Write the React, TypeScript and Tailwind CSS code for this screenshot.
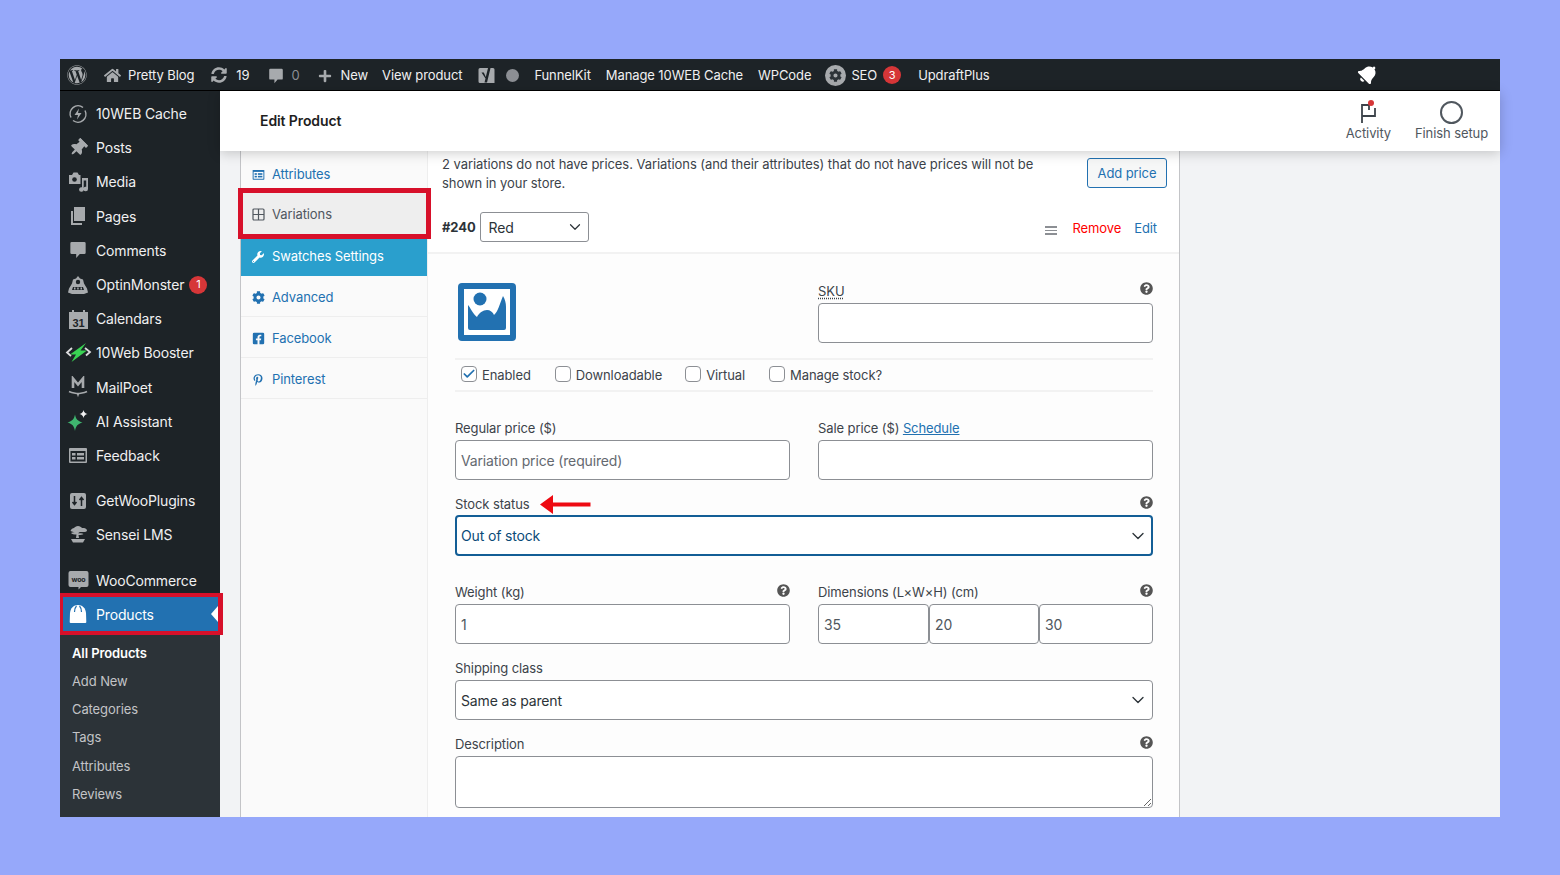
import { ReactNode } from 'react'
import { ChevronDown, Check } from 'lucide-react'
import {
  FaWordpress,
  FaHome,
  FaSyncAlt,
  FaPlus,
  FaBell,
  FaThumbtack,
  FaQuestionCircle,
  FaWrench,
  FaCog,
  FaFacebookSquare,
  FaPinterestP,
} from 'react-icons/fa'

const gray = '#a7aaad'

function Bubble({ size = 18, fill = gray }: { size?: number; fill?: string }) {
  return (
    <svg width={size} height={size} viewBox="0 0 20 20">
      <path d="M3 1h14a1.500 1.500 0 0 1 1.500 1.500v10.500a1.500 1.500 0 0 1-1.500 1.500h-5l-4 4.500v-4.500H3A1.500 1.500 0 0 1 1.500 13V2.500A1.500 1.500 0 0 1 3 1z" fill={fill} />
    </svg>
  )
}

function YoastIcon() {
  return (
    <svg width="19" height="20" viewBox="0 0 19 20">
      <path d="M3 3h13a1.500 1.500 0 0 1 1.500 1.500V18H3a1.500 1.500 0 0 1-1.500-1.500v-12A1.500 1.500 0 0 1 3 3z" fill={gray} />
      <path d="M4.500 7.500h2.300l2 4.500 2.700-11h2.500l-4 16.500H7.500l1-4z" fill="#1d2327" />
    </svg>
  )
}

function CacheIcon() {
  return (
    <svg width="20" height="20" viewBox="0 0 20 20" fill="none">
      <path d="M3 13.500A8 8 0 0 1 15 3.500M17 6.500A8 8 0 0 1 5 16.500" stroke={gray} strokeWidth="1.500" />
      <path d="M11 4.500 6.500 11H10l-1 4.500 4.500-6.500H10z" fill={gray} />
    </svg>
  )
}

function MediaIcon() {
  return (
    <svg width="21" height="21" viewBox="0 0 21 21" fill={gray}>
      <path d="M1 4h3l1.500-2.500h4L11 4h1.500v9H1z" />
      <circle cx="6.500" cy="8.500" r="2.300" fill="#1d2327" />
      <path d="M14 7h6v11a2.300 2.300 0 1 1-1.800-2.200V9.500h-2.500v9a2.300 2.300 0 1 1-1.700-2.200z" />
    </svg>
  )
}

function PagesIcon() {
  return (
    <svg width="20" height="20" viewBox="0 0 20 20" fill={gray}>
      <path d="M6 1h11v14H6z" />
      <path d="M3 5h2v12h9v2H3z" />
    </svg>
  )
}

function MonsterIcon() {
  return (
    <svg width="22" height="20" viewBox="0 0 22 20" fill={gray}>
      <path d="M11 1l2 2.500 3 1 1 4 3 5 1 4-4 1.500H5L1 17.500l1-4 3-5 1-4 3-1z" />
      <circle cx="11" cy="7" r="2.200" fill="#1d2327" />
      <path d="M6 12h10l1 3H5z" fill="#1d2327" />
      <path d="M7 12.500h1.500v2H7zM10.200 12.500h1.500v2h-1.500zM13.500 12.500H15v2h-1.500z" />
    </svg>
  )
}

function CalendarIcon() {
  return (
    <svg width="21" height="20" viewBox="0 0 21 20">
      <path d="M1 3h3V1h2v2h9V1h2v2h3v17H1z" fill={gray} />
      <text x="10.500" y="17.500" textAnchor="middle" fontSize="11" fontWeight="700" fontFamily="Liberation Sans, sans-serif" fill="#1d2327">
        31
      </text>
    </svg>
  )
}

function BoosterIcon() {
  return (
    <svg width="27" height="19" viewBox="0 0 27 19" fill="none">
      <path d="M7 5 2 9.500l4 3.500M20 5l5 4-4 3.500" stroke="#dcdcde" strokeWidth="1.800" />
      <path d="M21 0 5 11.500h6L6.500 19 22 7.500h-6.500z" fill="#39d353" />
    </svg>
  )
}

function MailPoetIcon() {
  return (
    <svg width="20" height="22" viewBox="0 0 20 22" fill="none">
      <path d="M5 12V2.500L10 8.500l5-6V12" stroke={gray} strokeWidth="2.600" />
      <path d="M1 15.500c3 1.500 6 1.500 8.500 2l.5 1.500.5-1.500c3-.5 6-.5 8.500-2" stroke={gray} strokeWidth="1.500" />
    </svg>
  )
}

function SparkIcon() {
  return (
    <svg width="22" height="22" viewBox="0 0 22 22">
      <path d="M8 4.500c.8 4.500 2.800 6.700 7.500 8C10.800 13.800 8.800 16 8 21c-.8-5-2.800-7.200-7.500-8.500C5.200 11.200 7.200 9 8 4.500z" fill="#3fb56f" />
      <path d="M16.500 0c.5 2.300 1.500 3.300 4 4-2.500.7-3.500 1.700-4 4-.5-2.300-1.500-3.300-4-4 2.500-.7 3.500-1.700 4-4z" fill="#f0f0f1" />
    </svg>
  )
}

function FormIcon({ fill = gray, bg = '#1d2327', size = 20 }: { fill?: string; bg?: string; size?: number }) {
  return (
    <svg width={size} height={size} viewBox="0 0 20 20">
      <rect x="1" y="3" width="18" height="15" rx="1" fill={fill} />
      <rect x="2.500" y="6" width="15" height="10.500" fill={bg} />
      <rect x="4" y="8" width="3.500" height="2.500" fill={fill} />
      <rect x="4" y="12" width="3.500" height="2.500" fill={fill} />
      <rect x="9" y="8" width="7" height="2.500" fill={fill} />
      <rect x="9" y="12" width="7" height="2.500" fill={fill} />
    </svg>
  )
}

function PluginsIcon() {
  return (
    <svg width="18" height="18" viewBox="0 0 18 18">
      <rect x="1" y="1" width="16" height="16" rx="2" fill={gray} />
      <path d="M5.500 4v8M3.500 10l2 2.500 2-2.500M12.500 14V6M10.500 8l2-2.500 2 2.500" stroke="#1d2327" strokeWidth="1.500" fill="none" />
    </svg>
  )
}

function SenseiIcon() {
  return (
    <svg width="20" height="20" viewBox="0 0 20 20" fill={gray}>
      <path d="M10 1c2 0 3 1 4 2h2c1 0 3 1 3 2.500S17 7 15.500 7H12c-1 0-1.500 1-1.500 1.500 2-.5 4-.5 5 .5-1 .8-3 1-5 1l.5 3H8l.5-3.500C6 9.500 4 9 3 8c1-.8 3-1 5-.5C7 7 4 7 2.500 6 3 4 5 3 6 3c1-1 2-2 4-2z" />
      <path d="M3 14h14l-2 3.500H5z" />
    </svg>
  )
}

function WooIcon() {
  return (
    <svg width="21" height="20" viewBox="0 0 21 20">
      <path d="M2.500 1h16A2 2 0 0 1 20.500 3v12a2 2 0 0 1-2 2H13l-2.500 2.500V17h-8a2 2 0 0 1-2-2V3a2 2 0 0 1 2-2z" fill={gray} />
      <text x="10.500" y="11.500" textAnchor="middle" fontSize="7" fontWeight="700" fontFamily="Inter, sans-serif" fill="#1d2327">
        woo
      </text>
    </svg>
  )
}

function BagIcon() {
  return (
    <svg width="18" height="20" viewBox="0 0 18 20" fill="#fff">
      <path d="M9 1c4.500 0 7.500 3 8 8l.3 9a1 1 0 0 1-1 1H1.700a1 1 0 0 1-1-1L1 9c.5-5 3.500-8 8-8z" />
      <path d="M5.500 8c0-3 1-5 2-6M12.500 8c0-3-1-5-2-6" stroke="#2271b1" strokeWidth="1.200" fill="none" />
    </svg>
  )
}

type MenuEntry = { label: string; icon: ReactNode; badge?: string }

const menu: MenuEntry[] = [
  { label: '10WEB Cache', icon: <CacheIcon /> },
  { label: 'Posts', icon: <FaThumbtack size={18} color={gray} className="rotate-45" /> },
  { label: 'Media', icon: <MediaIcon /> },
  { label: 'Pages', icon: <PagesIcon /> },
  { label: 'Comments', icon: <Bubble /> },
  { label: 'OptinMonster', icon: <MonsterIcon />, badge: '1' },
  { label: 'Calendars', icon: <CalendarIcon /> },
  { label: '10Web Booster', icon: <BoosterIcon /> },
  { label: 'MailPoet', icon: <MailPoetIcon /> },
  { label: 'AI Assistant', icon: <SparkIcon /> },
  { label: 'Feedback', icon: <FormIcon /> },
]

const menuTwo: MenuEntry[] = [
  { label: 'GetWooPlugins', icon: <PluginsIcon /> },
  { label: 'Sensei LMS', icon: <SenseiIcon /> },
]

function MenuRow({ item }: { item: MenuEntry }) {
  return (
    <div className="flex h-[34.2px] items-center text-[14px] tracking-[-0.15px] text-[#f0f0f1]">
      <div className="flex w-[36px] shrink-0 justify-center">{item.icon}</div>
      <span>{item.label}</span>
      {item.badge && (
        <span className="ml-[5px] flex h-[18px] w-[18px] items-center justify-center rounded-full bg-[#d63638] text-[11px] text-white">
          {item.badge}
        </span>
      )}
    </div>
  )
}

function Sidebar() {
  return (
    <aside className="flex w-[160px] shrink-0 flex-col bg-[#1d2327] pt-[5.5px]">
      {menu.map((item) => (
        <MenuRow key={item.label} item={item} />
      ))}
      <div className="h-[11px]" />
      {menuTwo.map((item) => (
        <MenuRow key={item.label} item={item} />
      ))}
      <div className="h-[11px]" />
      <MenuRow item={{ label: 'WooCommerce', icon: <WooIcon /> }} />
      <div className="relative flex h-[34px] items-center bg-[#2271b1] text-[14px] tracking-[-0.15px] text-white">
        <div className="flex w-[36px] shrink-0 justify-center">
          <BagIcon />
        </div>
        <span>Products</span>
        <div className="absolute right-[2px] top-1/2 z-10 h-0 w-0 -translate-y-1/2 border-y-[8px] border-r-[7px] border-y-transparent border-r-white" />
        <div className="pointer-events-none absolute inset-x-0 right-[-3px] top-[-4px] bottom-[-4px] border-y-4 border-l-[3px] border-r-[5px] border-[#d7102a]" />
      </div>
      <div className="flex flex-1 flex-col bg-[#2c3338] pl-3 pt-[8px] text-[13px] text-[#c3c4c7]">
        <div className="flex h-[28.300px] items-center font-semibold text-white">All Products</div>
        {['Add New', 'Categories', 'Tags', 'Attributes', 'Reviews'].map((label) => (
          <div key={label} className="flex h-[28.300px] items-center">
            {label}
          </div>
        ))}
      </div>
    </aside>
  )
}

function AdminBar() {
  return (
    <div className="flex h-[32px] shrink-0 items-center border-b border-[#000] bg-[#1d2327] pt-[2px] text-[13px] text-[#f0f0f1]">
      <FaWordpress size={20} color={gray} className="-mt-[2px] ml-[7px]" />
      <FaHome size={17} color={gray} className="-mt-[1px] ml-[17px]" />
      <span className="ml-[7px]">Pretty Blog</span>
      <FaSyncAlt size={16} color={gray} className="-mt-[1px] ml-[17px]" />
      <span className="ml-[9px]">19</span>
      <span className="ml-[19px]">
        <Bubble size={16} />
      </span>
      <span className="ml-[7px] text-[#8c8f94]">0</span>
      <FaPlus size={14} color={gray} className="ml-[18px]" />
      <span className="ml-[9px]">New</span>
      <span className="ml-[14px]">View product</span>
      <span className="-mt-[2px] ml-[15px]">
        <YoastIcon />
      </span>
      <span className="-mt-[1px] ml-[10px] h-[13px] w-[13px] rounded-full bg-[#8c8f94]" />
      <span className="ml-[15px]">FunnelKit</span>
      <span className="ml-[15px]">Manage 10WEB Cache</span>
      <span className="ml-[15px]">WPCode</span>
      <span className="-mt-[1px] ml-[14px] flex h-[21px] w-[21px] items-center justify-center rounded-full bg-[#a7aaad]">
        <FaCog size={13} color="#2c3338" />
      </span>
      <span className="ml-[5px]">SEO</span>
      <span className="-mt-[1px] ml-[6px] flex h-[18px] w-[18px] items-center justify-center rounded-full bg-[#d63638] text-[11px] text-white">
        3
      </span>
      <span className="ml-[17px]">UpdraftPlus</span>
      <FaBell size={20} color="#fff" className="-mt-[4px] ml-auto mr-[122px] rotate-45" />
    </div>
  )
}

function PageHeader() {
  return (
    <header className="relative z-10 flex h-[60px] shrink-0 items-center justify-between bg-white pl-10 shadow-[0_2px_12px_rgba(0,0,0,0.2)]">
      <h1 className="pb-[2px] text-[14px] font-semibold text-[#1e1e1e]">Edit Product</h1>
      <div className="flex items-start gap-6 pr-3 text-[13px] text-[#50575e]">
        <div className="flex flex-col items-center">
          <div className="relative h-[28px] pt-[3px]">
            <svg width="17" height="21" viewBox="0 0 17 21" fill="none" stroke="#3c434a" strokeWidth="1.800">
              <path d="M2 21V3h7v5" />
              <path d="M2 14h13V6" />
            </svg>
            <span className="absolute right-[3px] top-[1px] h-[6px] w-[6px] rounded-full bg-[#d63638]" />
          </div>
          <span className="-mt-[3px]">Activity</span>
        </div>
        <div className="flex flex-col items-center">
          <div className="mt-[2px] h-[23px] w-[23px] rounded-full border-2 border-[#50575e]" />
          <span>Finish setup</span>
        </div>
      </div>
    </header>
  )
}

const tabLink = 'flex h-[41px] items-center gap-[7px] border-b border-[#eee] pl-[11px] pt-[3px] text-[13px] text-[#2271b1]'

function Tabs() {
  return (
    <nav className="w-[187px] shrink-0 border-r border-[#eee] bg-[#fafafa] pt-[2px]">
      <div className={tabLink}>
        <FormIcon fill="#2271b1" bg="#fff" size={13} />
        Attributes
      </div>
      <div className="relative flex h-[41px] items-center gap-[7px] bg-[#eee] pl-[11px] text-[13px] text-[#50575e]">
        <svg width="13" height="13" viewBox="0 0 13 13" fill="none" stroke="#50575e" strokeWidth="1.200">
          <rect x="1" y="1" width="11" height="11" rx="1" />
          <path d="M6.500 1v11M1 6.500h11" />
        </svg>
        Variations
        <div className="pointer-events-none absolute left-[-3px] right-[-4px] top-[-6px] bottom-[-4px] z-10 border-[5px] border-[#d7102a]" />
      </div>
      <div className="flex h-[41px] items-center gap-[8px] bg-[#2a9fcd] pl-[11px] pt-[2px] text-[13px] text-white">
        <FaWrench size={12} />
        Swatches Settings
      </div>
      <div className={tabLink}>
        <FaCog size={13} />
        Advanced
      </div>
      <div className={tabLink}>
        <FaFacebookSquare size={13} />
        Facebook
      </div>
      <div className={`${tabLink} !gap-[8px]`}>
        <FaPinterestP size={12} />
        Pinterest
      </div>
    </nav>
  )
}

function Help() {
  return <FaQuestionCircle size={13} color="#555" />
}

function Label({ text, help, children }: { text: ReactNode; help?: boolean; children?: ReactNode }) {
  return (
    <div className="flex h-[18px] items-center justify-between text-[13px] leading-none text-[#3c434a]">
      <span>{text}</span>
      {children}
      {help && (
        <span className="-mt-[4px]">
          <Help />
        </span>
      )}
    </div>
  )
}

const inputClass =
  'h-[40px] w-full rounded-[4px] border border-[#8c8f94] bg-white px-[5px] text-[14px] tracking-[-0.15px] text-[#50575e] placeholder:text-[#646970] outline-none'

function SelectBox({ value, focused }: { value: string; focused?: boolean }) {
  return (
    <div
      className={
        focused
          ? 'flex h-[41px] items-center justify-between rounded-[4px] border-2 border-[#135e96] bg-white pl-[4px] pr-[3px] text-[14px] tracking-[-0.15px] text-[#0a4b78]'
          : 'flex h-[40px] items-center justify-between rounded-[4px] border border-[#8c8f94] bg-white pl-[5px] pr-[4px] text-[14px] tracking-[-0.15px] text-[#2c3338]'
      }
    >
      <span>{value}</span>
      <ChevronDown size={20} strokeWidth={1.600} color="#2c3338" />
    </div>
  )
}

function CheckRow({ label, on, gap }: { label: string; on?: boolean; gap: string }) {
  return (
    <div className={`flex items-center gap-[5px] pt-[1px] text-[13px] text-[#3c434a] ${gap}`}>
      <span className="-mt-[3px] flex h-[16px] w-[16px] items-center justify-center rounded-[4px] border border-[#8c8f94] bg-white">
        {on && <Check size={14} strokeWidth={3} color="#2271b1" />}
      </span>
      {label}
    </div>
  )
}

function VariationForm() {
  return (
    <div className="flex-1 bg-[#fdfdfd] pl-[27px] pr-[26px] pt-[29px]">
      <div className="flex gap-[28px]">
        <div className="w-[335px] pl-[3px]">
          <svg width="58" height="58" viewBox="0 0 58 58">
            <rect width="58" height="58" rx="4" fill="#2271b1" />
            <rect x="6" y="6" width="46" height="46" fill="#fff" />
            <circle cx="22" cy="16" r="6.500" fill="#2271b1" />
            <path
              d="M10 22C12 24 15 31 19 34C21 30 25 27 29 27C32 27 35 29 36 32C40 29 42 20 45 13C47 16 48 20 48 24L48 45Q48 47 46 47L12 47Q10 47 10 45Z"
              fill="#2271b1"
            />
          </svg>
        </div>
        <div className="w-[335px]">
          <div className="flex h-[20px] items-end justify-between pb-[5px] text-[13px] leading-none text-[#3c434a]">
            <span className="underline decoration-dotted underline-offset-2">SKU</span>
            <span className="mb-[3px]">
              <Help />
            </span>
          </div>
          <input className={inputClass} readOnly />
        </div>
      </div>
      <div className="mt-[15px] flex h-[34px] items-center border-y-2 border-[#f2f2f2] pl-[6px]">
        <CheckRow label="Enabled" on gap="" />
        <CheckRow label="Downloadable" gap="ml-[24px]" />
        <CheckRow label="Virtual" gap="ml-[23px]" />
        <CheckRow label="Manage stock?" gap="ml-[24px]" />
      </div>
      <div className="mt-[27px] flex gap-[28px]">
        <div className="w-[335px]">
          <Label text="Regular price ($)" />
          <div className="h-[3px]" />
          <input className={inputClass} placeholder="Variation price (required)" readOnly />
        </div>
        <div className="w-[335px]">
          <Label
            text={
              <>
                Sale price ($) <span className="text-[#2271b1] underline">Schedule</span>
              </>
            }
          />
          <div className="h-[3px]" />
          <input className={inputClass} readOnly />
        </div>
      </div>
      <div className="mt-[15px]">
        <Label text="Stock status" help />
        <div className="h-[2px]" />
        <SelectBox value="Out of stock" focused />
      </div>
      <div className="mt-[27px] flex gap-[28px]">
        <div className="w-[335px]">
          <Label text="Weight (kg)" help />
          <div className="h-[3px]" />
          <input className={inputClass} defaultValue="1" readOnly />
        </div>
        <div className="w-[335px]">
          <Label text="Dimensions (L×W×H) (cm)" help />
          <div className="h-[3px]" />
          <div className="flex">
            <input className={`${inputClass} !w-[111px]`} defaultValue="35" readOnly />
            <input className={`${inputClass} !w-[110px]`} defaultValue="20" readOnly />
            <input className={`${inputClass} !w-[114px]`} defaultValue="30" readOnly />
          </div>
        </div>
      </div>
      <div className="mt-[15px]">
        <Label text="Shipping class" />
        <div className="h-[3px]" />
        <SelectBox value="Same as parent" />
      </div>
      <div className="mt-[15px]">
        <Label text="Description" help />
        <div className="h-[3px]" />
        <textarea className="block h-[52px] w-full rounded-[4px] border border-[#8c8f94] bg-white" readOnly />
      </div>
    </div>
  )
}

function VariationPanel() {
  return (
    <div className="flex min-w-0 flex-1 flex-col">
      <div className="flex bg-white pl-[14px] pr-[12px] pt-[3px]">
        <p className="w-[620px] pt-[1px] text-[13px] leading-[19px] tracking-[-0.06px] text-[#3c434a]">
          2 variations do not have prices. Variations (and their attributes) that do not have prices will not be shown
          in your store.
        </p>
        <button className="ml-auto mt-[4px] h-[30px] w-[80px] rounded-[3px] border border-[#2271b1] bg-[#f6f7f7] pt-[2px] text-[13px] text-[#2271b1]">
          Add price
        </button>
      </div>
      <div className="flex h-[61px] items-start border-b-2 border-[#f2f2f2] bg-white pl-[14px] pr-[22px] pt-[19px]">
        <span className="mt-[6px] text-[13px] font-bold text-[#2c3338]">#240</span>
        <div className="ml-[4px] flex h-[30px] w-[109px] items-center justify-between rounded-[3px] border border-[#8c8f94] pl-[8px] pr-[4px] text-[14px] text-[#2c3338]">
          Red
          <ChevronDown size={18} strokeWidth={1.600} color="#2c3338" />
        </div>
        <div className="ml-auto mt-[7px] flex items-center text-[13px]">
          <span className="mr-[16px] mt-[3px] flex w-[12px] flex-col gap-[2px]">
            <span className="h-[1.500px] bg-[#8c8f94]" />
            <span className="h-[1.500px] bg-[#8c8f94]" />
            <span className="h-[1.500px] bg-[#8c8f94]" />
          </span>
          <span className="text-[#ff0000]">Remove</span>
          <span className="ml-[13px] text-[#2271b1]">Edit</span>
        </div>
      </div>
      <VariationForm />
    </div>
  )
}

export default function App() {
  return (
    <div className="flex h-[875px] w-full flex-col overflow-hidden bg-[#96a8fa] pb-[58px] pl-[60px] pr-[60px] pt-[59px] font-['Inter','Noto_Sans',sans-serif] tracking-[-0.1px]">
      <div className="flex h-full flex-col">
        <AdminBar />
        <div className="flex min-h-0 flex-1">
          <Sidebar />
          <main className="flex min-w-0 flex-1 flex-col bg-[#f2f3f5]">
            <PageHeader />
            <div className="flex min-h-0 flex-1 pl-5">
              <div className="flex w-[940px] border-x border-[#c3c4c7]">
                <Tabs />
                <VariationPanel />
              </div>
            </div>
          </main>
        </div>
      </div>
      <div className="pointer-events-none absolute left-[540px] top-[495px]">
        <svg width="52" height="19" viewBox="0 0 52 19">
          <path d="M0 9.500 13 0v7.500h37.500v4H13V19z" fill="#ee0a12" />
        </svg>
      </div>
    </div>
  )
}
